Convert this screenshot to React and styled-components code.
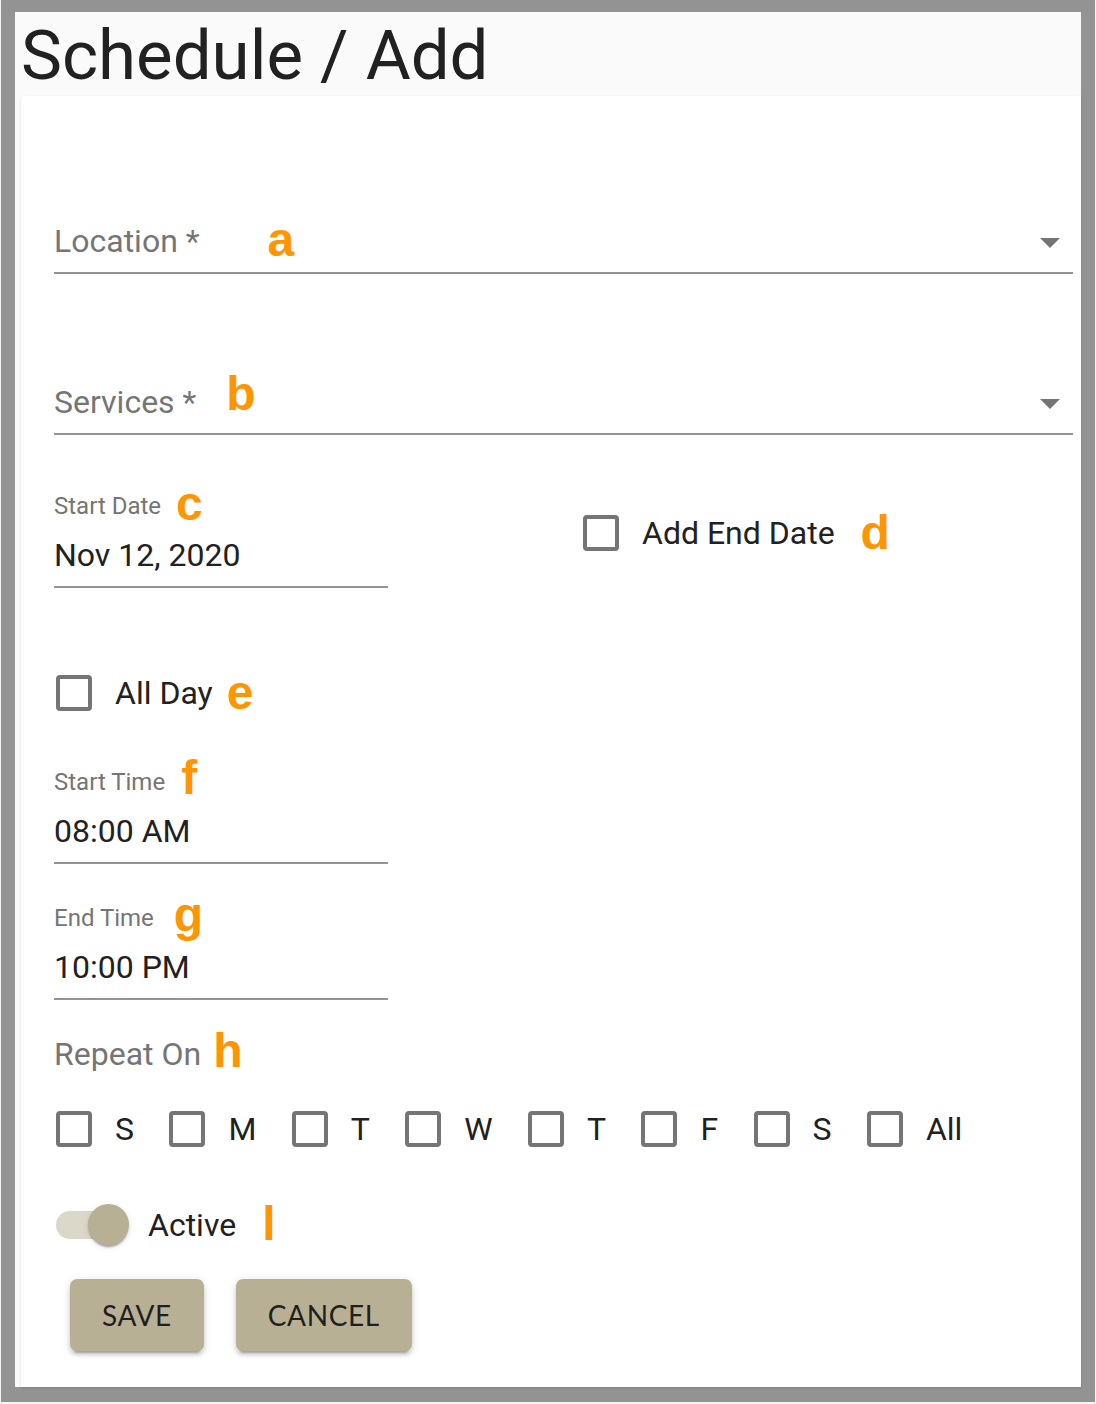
import React from 'react';
import styled, { createGlobalStyle } from 'styled-components';

const GlobalStyle = createGlobalStyle`
  html, body {
    margin: 0;
    padding: 0;
    background: #f4f4f4;
  }
  body {
    font-family: Roboto, "Noto Sans", Arial, sans-serif;
  }
`;

const Frame = styled.div`
  box-sizing: border-box;
  width: 1094px;
  height: 1402px;
  margin: 0 1px;
  border: 14px solid #939393;
  border-top-width: 12px;
  border-bottom-width: 15px;
  background: #fafafa;
  display: flex;
  flex-direction: column;
`;

const PageTitle = styled.h1`
  box-sizing: border-box;
  height: 84px;
  margin: 0;
  padding: 4px 0 0 6px;
  font: 400 69px/80px Roboto, sans-serif;
  color: #212121;
`;

const Card = styled.div`
  flex: 1;
  margin-left: 6px;
  padding: 0 8px 0 33px;
  background: #fff;
  border-radius: 4px 0 0 0;
  box-shadow: 0 1px 3px rgba(0, 0, 0, 0.12);
  display: flex;
  flex-direction: column;
`;

const SelectField = styled.div`
  margin-top: ${p => p.$mt}px;
  height: 40px;
  padding-bottom: 11px;
  border-bottom: 2px solid #949494;
  display: flex;
  align-items: center;
`;

const FieldLabel = styled.span`
  font-size: 32px;
  line-height: 40px;
  color: #757575;
  white-space: nowrap;
`;

// orange annotation letters laid over the form
const Mark = styled.span`
  font: 700 48px/0 "Liberation Sans", Arial, sans-serif;
  color: #ff9500;
  margin-left: ${p => p.$ml}px;
  vertical-align: ${p => p.$va}px;
`;

const Arrow = styled.span`
  margin: 3px 13px 0 auto;
  width: 0;
  height: 0;
  border-left: 10px solid transparent;
  border-right: 10px solid transparent;
  border-top: 10px solid #757575;
`;

const DateRow = styled.div`
  margin-top: 56px;
  display: grid;
  grid-template-columns: 529px 1fr;
  align-items: start;
`;

const DateField = styled.div`
  width: 334px;
  margin-top: ${p => p.$mt || 0}px;
  padding-bottom: 11px;
  border-bottom: 2px solid #949494;
`;

const SmallLabel = styled.div`
  font-size: 24px;
  line-height: 30px;
  color: #757575;
  white-space: nowrap;
`;

const Value = styled.div`
  margin-top: 14px;
  font-size: 32px;
  line-height: 40px;
  color: #212121;
`;

const CheckRow = styled.label`
  margin-top: ${p => p.$mt || 0}px;
  margin-right: ${p => p.$mr || 0}px;
  height: 40px;
  display: flex;
  align-items: center;
  gap: 23px;
`;

const Box = styled.span`
  box-sizing: border-box;
  flex: none;
  width: 36px;
  height: 36px;
  margin-left: ${p => p.$ml || 0}px;
  border: 4px solid #757575;
  border-radius: 4px;
`;

const CheckText = styled.span`
  font-size: 32px;
  line-height: 40px;
  color: #212121;
  white-space: nowrap;
`;

const RepeatLabel = styled.div`
  margin-top: 34px;
  font-size: 32px;
  line-height: 40px;
  color: #757575;
`;

const DaysRow = styled.div`
  margin-top: 35px;
  display: flex;
  align-items: center;
`;

const SwitchRow = styled.div`
  margin-top: 55px;
  height: 42px;
  display: flex;
  align-items: center;
  gap: 24px;
`;

const Switch = styled.span`
  position: relative;
  flex: none;
  width: 68px;
  height: 42px;
  margin-left: 2px;
  display: inline-flex;
  align-items: center;
`;

const Track = styled.span`
  width: 68px;
  height: 28px;
  border-radius: 14px;
  background: #dcd8c9;
`;

const Thumb = styled.span`
  position: absolute;
  left: 32px;
  top: 0;
  width: 41px;
  height: 41px;
  border-radius: 50%;
  background: #b8b095;
  box-shadow: 0 4px 2px -2px rgba(0, 0, 0, 0.2), 0 2px 2px 0 rgba(0, 0, 0, 0.14),
    0 2px 6px 0 rgba(0, 0, 0, 0.12);
`;

const ButtonRow = styled.div`
  margin-top: 33px;
  padding-left: 16px;
  display: flex;
  gap: 32px;
`;

const Button = styled.button`
  height: 72px;
  padding: 0 32px;
  border: none;
  border-radius: 7px;
  background: #b8b095;
  color: #1f1f1f;
  font: 400 28px Lato, "Liberation Sans", sans-serif;
  letter-spacing: 0.6px;
  box-shadow: 0 6px 2px -4px rgba(0, 0, 0, 0.2), 0 4px 4px 0 rgba(0, 0, 0, 0.14),
    0 2px 10px 0 rgba(0, 0, 0, 0.12);
`;

const days = ['S', 'M', 'T', 'W', 'T', 'F', 'S', 'All'];

const App = () => {
  return (
    <>
      <GlobalStyle />
      <Frame>
        <PageTitle>Schedule / Add</PageTitle>
        <Card>
          <SelectField $mt={125}>
            <FieldLabel>
              Location *<Mark $ml={68} $va={-4}>a</Mark>
            </FieldLabel>
            <Arrow />
          </SelectField>

          <SelectField $mt={108}>
            <FieldLabel>
              Services *<Mark $ml={30} $va={3}>b</Mark>
            </FieldLabel>
            <Arrow />
          </SelectField>

          <DateRow>
            <DateField>
              <SmallLabel>
                Start Date<Mark $ml={15} $va={-6}>c</Mark>
              </SmallLabel>
              <Value>Nov 12, 2020</Value>
            </DateField>
            <CheckRow $mt={22}>
              <Box />
              <CheckText>
                Add End Date<Mark $ml={26} $va={-5}>d</Mark>
              </CheckText>
            </CheckRow>
          </DateRow>

          <CheckRow $mt={85}>
            <Box $ml={2} />
            <CheckText>
              All Day<Mark $ml={14} $va={-5}>e</Mark>
            </CheckText>
          </CheckRow>

          <DateField $mt={54}>
            <SmallLabel>
              Start Time<Mark $ml={16} $va={-4}>f</Mark>
            </SmallLabel>
            <Value>08:00 AM</Value>
          </DateField>

          <DateField $mt={39}>
            <SmallLabel>
              End Time<Mark $ml={20} $va={-5}>g</Mark>
            </SmallLabel>
            <Value>10:00 PM</Value>
          </DateField>

          <RepeatLabel>
            Repeat On<Mark $ml={12} $va={-2}>h</Mark>
          </RepeatLabel>

          <DaysRow>
            {days.map((day, i) => (
              <CheckRow key={i} $mr={i < days.length - 1 ? 35.4 : 0}>
                <Box $ml={i === 0 ? 2 : 0} />
                <CheckText>{day}</CheckText>
              </CheckRow>
            ))}
          </DaysRow>

          <SwitchRow>
            <Switch>
              <Track />
              <Thumb />
            </Switch>
            <CheckText>
              Active<Mark $ml={26} $va={-4}>l</Mark>
            </CheckText>
          </SwitchRow>

          <ButtonRow>
            <Button>SAVE</Button>
            <Button>CANCEL</Button>
          </ButtonRow>
        </Card>
      </Frame>
    </>
  );
};

export default App;
